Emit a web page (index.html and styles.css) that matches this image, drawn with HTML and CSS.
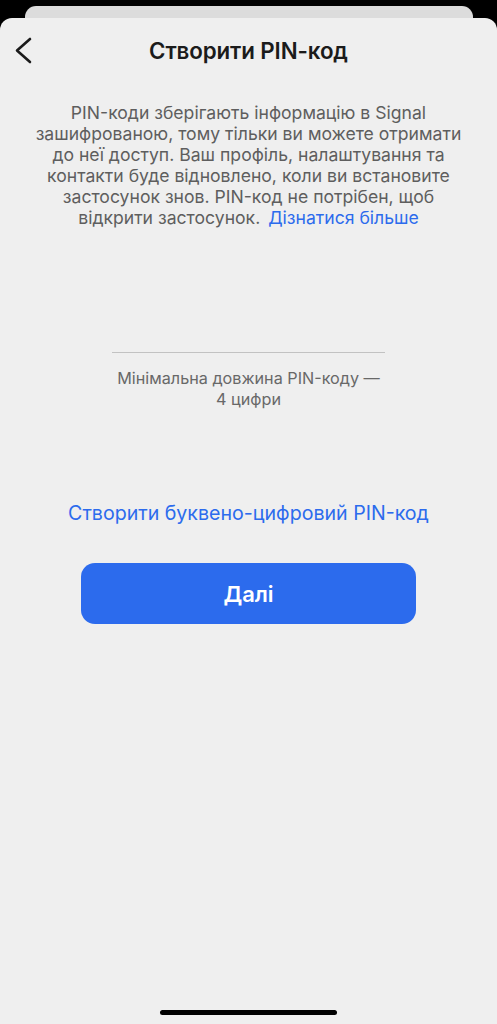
FILE: index.html
```html
<!DOCTYPE html>
<html lang="uk">
<head>
<meta charset="utf-8">
<title>Створити PIN-код</title>
<link rel="stylesheet" href="styles.css">
</head>
<body>
<div class="back-card"></div>
<main class="sheet">
  <header class="nav">
    <button class="back" aria-label="Назад">
      <svg width="20" height="28" viewBox="0 0 20 28"><path d="M16 2 L3 13.5 L16 25" fill="none" stroke="#1b1b1b" stroke-width="2.6" stroke-linecap="round" stroke-linejoin="round"/></svg>
    </button>
    <h1 class="title">Створити PIN-код</h1>
    <span></span>
  </header>
  <p class="intro">PIN-коди зберігають інформацію в Signal<br>зашифрованою, тому тільки ви можете отримати<br>до неї доступ. Ваш профіль, налаштування та<br>контакти буде відновлено, коли ви встановите<br>застосунок знов. PIN-код не потрібен, щоб<br>відкрити застосунок. <a class="link" href="#">Дізнатися більше</a></p>
  <div class="pin-field"></div>
  <p class="hint">Мінімальна довжина PIN-коду —<br>4 цифри</p>
  <a class="alt-link" href="#">Створити буквено-цифровий PIN-код</a>
  <button class="next">Далі</button>
  <div class="home-indicator"></div>
</main>
</body>
</html>
```
FILE: styles.css
```css
html, body {
  margin: 0;
  padding: 0;
  background: #000;
}
body {
  font-family: "Inter", "Noto Sans", sans-serif;
  width: 497px;
  height: 1024px;
  overflow: hidden;
}
.back-card {
  margin: 6px 24px 0 25px;
  height: 12px;
  background: #dcdcdc;
  border-radius: 11px 11px 0 0;
}
.sheet {
  background: #efefef;
  border-radius: 12px 12px 0 0;
  height: 1006px;
  display: flex;
  flex-direction: column;
  align-items: center;
}
.nav {
  align-self: stretch;
  display: grid;
  grid-template-columns: 1fr auto 1fr;
  align-items: center;
  height: 44px;
  padding-top: 11px;
}
.back {
  justify-self: start;
  margin-left: 14px;
  padding: 0;
  border: 0;
  background: none;
  display: flex;
}
.title {
  margin: 0;
  font-size: 22.3px;
  line-height: 28px;
  font-weight: 600;
  color: #1b1b1b;
  letter-spacing: -0.1px;
}
.intro {
  margin: 29px 0 0;
  text-align: center;
  font-size: 17.6px;
  line-height: 21px;
  color: #5e5e5e;
  white-space: nowrap;
}
.link, .alt-link {
  color: #2c6bed;
  text-decoration: none;
}
.link { margin-left: 3px; }
.pin-field {
  margin-top: 84px;
  width: 273px;
  height: 40px;
  border-bottom: 1px solid #c2c2c2;
}
.hint {
  margin: 15px 0 0;
  text-align: center;
  font-size: 16.2px;
  line-height: 21px;
  color: #686868;
}
.alt-link {
  margin-top: 91px;
  font-size: 19.6px;
  line-height: 24px;
}
.next {
  margin-top: 38px;
  width: 335px;
  height: 61px;
  border: 0;
  border-radius: 14px;
  background: #2c6bed;
  color: #fff;
  font-family: inherit;
  font-size: 22px;
  font-weight: 600;
}
.home-indicator {
  margin-top: auto;
  margin-bottom: 9px;
  width: 177px;
  height: 5px;
  border-radius: 3px;
  background: #000;
}
```
